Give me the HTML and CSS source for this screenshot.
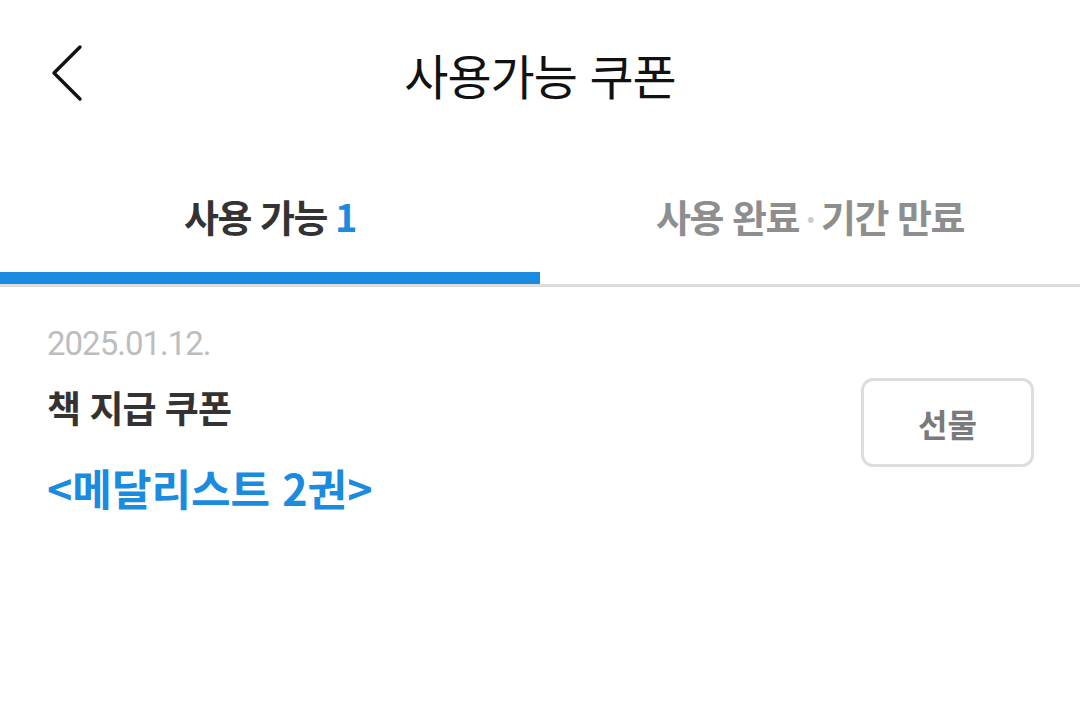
FILE: index.html
```html
<!DOCTYPE html>
<html lang="ko">
<head>
  <meta charset="UTF-8">
  <title>사용가능 쿠폰</title>
  <link rel="stylesheet" href="styles.css">
</head>
<body>

<div class="header">
  <a class="back" href="#">
    <svg width="36" height="60" viewBox="0 0 36 60">
      <polyline points="32,4 6,30 32,56" fill="none" stroke="#111" stroke-width="3.4" stroke-linecap="round" stroke-linejoin="round"/>
    </svg>
  </a>
  <h1>사용가능 쿠폰</h1>
</div>

<div class="tabs">
  <div class="tab active">사용 가능 <span class="count">1</span></div>
  <div class="tab">사용 완료<span class="dot">•</span>기간 만료</div>
</div>
<div class="tab-line"><div class="tab-bar"></div></div>

<div class="coupon">
  <div class="info">
    <div class="date">2025.01.12.</div>
    <div class="name">책 지급 쿠폰</div>
    <div class="book">&lt;메달리스트 2권&gt;</div>
  </div>
  <button class="gift">선물</button>
</div>

</body>
</html>
```

FILE: styles.css
```css
body {
  margin: 0;
  background-color: #fff;
  font-family: "Noto Sans CJK KR", "Noto Sans", sans-serif;
  color: #222;
}
.header {
  height: 150px;
  display: flex;
  align-items: center;
  justify-content: center;
  position: relative;
}
.back {
  position: absolute;
  left: 48px;
  top: 43px;
}
h1 {
  margin: 0 0 2px;
  font-size: 48px;
  font-weight: 400;
  color: #111;
  letter-spacing: -1px;
}
.tabs {
  display: flex;
  height: 122px;
}
.tab {
  flex: 1;
  display: flex;
  align-items: center;
  justify-content: center;
  font-size: 38px;
  font-weight: 700;
  color: #8e8e8e;
  letter-spacing: -1.5px;
  padding-top: 8px;
}
.tab.active {
  color: #333;
}
.count {
  color: #1b8be0;
  margin-left: 8px;
}
.dot {
  color: #ccc;
  font-size: 20px;
  margin: 4px 8px 0;
}
.tab-line {
  border-bottom: 3px solid #ddd;
}
.tab-bar {
  width: 540px;
  height: 12px;
  background-color: #1b8be0;
}
.coupon {
  display: flex;
  justify-content: space-between;
  align-items: center;
  padding: 37px 46px 0 47px;
}
.date {
  font-family: Roboto, "Noto Sans", sans-serif;
  font-size: 33px;
  color: #bdbdbd;
  letter-spacing: -1px;
  line-height: 40px;
}
.name {
  margin-top: 18px;
  font-size: 37px;
  font-weight: 700;
  color: #333;
  letter-spacing: -1px;
  line-height: 50px;
}
.book {
  margin-top: 27px;
  font-size: 43px;
  font-weight: 700;
  color: #1b8be0;
  line-height: 56px;
}
.gift {
  width: 173px;
  height: 89px;
  margin-top: 6px;
  background-color: #fff;
  border: 3px solid #ddd;
  border-radius: 12px;
  font-family: "Noto Sans CJK KR", sans-serif;
  font-size: 32px;
  font-weight: 700;
  color: #7a7a7a;
}
```
